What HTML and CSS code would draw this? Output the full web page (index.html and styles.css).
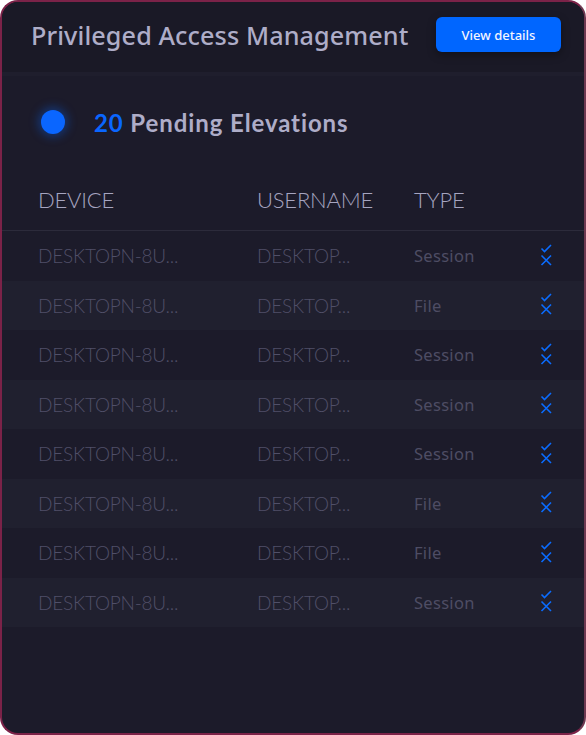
FILE: index.html
```html
<!DOCTYPE html>
<html lang="en">
<head>
  <meta charset="UTF-8">
  <meta name="viewport" content="width=device-width, initial-scale=1.0">
  <title>Privileged Access Management</title>
  <link rel="stylesheet" href="styles.css">
</head>
<body>

  <div class="card">

    <!-- Header -->
    <div class="card-header">
      <h1>Privileged Access Management</h1>
      <button class="btn">View details</button>
    </div>

    <!-- Summary -->
    <div class="summary">
      <span class="dot"></span>
      <h2><span class="count">20</span> Pending Elevations</h2>
    </div>

    <!-- Table -->
    <div class="table">
      <div class="row head">
        <div>DEVICE</div>
        <div>USERNAME</div>
        <div>TYPE</div>
        <div></div>
      </div>
      <div id="rows"></div>
    </div>

  </div>

  <script>
    const types = ["Session", "File", "Session", "Session", "Session", "File", "File", "Session"];

    const icons = `
      <svg class="icon" width="13" height="24" viewBox="0 0 13 24">
        <path d="M1.5 4.5 L4.5 7.5 L11 1" fill="none" stroke="#0a6cff" stroke-width="1.6"/>
        <path d="M1.5 11.5 L11 21 M11 11.5 L1.5 21" fill="none" stroke="#0a6cff" stroke-width="1.6"/>
      </svg>`;

    const rows = document.getElementById("rows");
    types.forEach(function (type) {
      const row = document.createElement("div");
      row.className = "row";
      row.innerHTML = `
        <div class="cell">DESKTOPN-8U...</div>
        <div class="cell">DESKTOP...</div>
        <div class="cell type">${type}</div>
        <div class="cell actions">${icons}</div>
      `;
      rows.appendChild(row);
    });
  </script>

</body>
</html>
```

FILE: styles.css
```css
* {
  box-sizing: border-box;
  margin: 0;
  padding: 0;
}

html, body {
  height: 100%;
  background-color: #ffffff;
}

body {
  font-family: 'Lato', 'Noto Sans', sans-serif;
}

.card {
  width: 586px;
  height: 735px;
  background-color: #1c1b2a;
  border: 2px solid #7b2248;
  border-right-color: #6e3850;
  border-radius: 18px;
  overflow: hidden;
}

.card-header {
  display: flex;
  justify-content: space-between;
  align-items: center;
  height: 74px;
  padding: 0 23px 0 29px;
  background-color: #1a1926;
  border-bottom: 4px solid #1f1e2d;
}

.card-header h1 {
  font-family: 'Noto Sans', sans-serif;
  font-size: 25.2px;
  font-weight: 500;
  color: #aeadc8;
  letter-spacing: 0.1px;
  margin-top: -4px;
}

.btn {
  font-family: 'Noto Sans', sans-serif;
  background-color: #0066ff;
  color: #f2f5ff;
  border: none;
  border-radius: 6px;
  font-size: 13px;
  font-weight: 500;
  width: 125px;
  height: 35px;
  margin-top: -5px;
  box-shadow: 0 3px 8px rgba(0, 0, 0, 0.35);
}

.summary {
  display: flex;
  align-items: center;
  gap: 29px;
  padding-left: 39px;
  height: 92px;
}

.dot {
  width: 24px;
  height: 24px;
  border-radius: 50%;
  background-color: #0a66ff;
  box-shadow: 0 0 10px 3px rgba(10, 102, 255, 0.35);
}

.summary h2 {
  font-size: 24px;
  font-weight: 700;
  color: #aeadc8;
  letter-spacing: 0.9px;
}

.count {
  color: #0a66ff;
}

.row {
  display: grid;
  grid-template-columns: 219px 157px 126px 1fr;
  align-items: center;
  padding-left: 36px;
  height: 49.5px;
}

.row:nth-child(even) {
  background-color: #20202f;
}

.row.head {
  height: 63px;
  padding-top: 1px;
  border-bottom: 1px solid #2c2b3b;
  font-size: 22px;
  font-weight: 300;
  color: #a6a5c0;
  letter-spacing: -0.2px;
}

.cell {
  font-size: 19px;
  font-weight: 300;
  color: #504f68;
  letter-spacing: -0.2px;
}

.cell.type {
  font-family: 'Noto Sans', sans-serif;
  font-size: 16.5px;
  font-weight: 400;
  color: #4e4d64;
  letter-spacing: 0.3px;
}

.actions {
  display: flex;
}

.icon {
  display: block;
}
```
